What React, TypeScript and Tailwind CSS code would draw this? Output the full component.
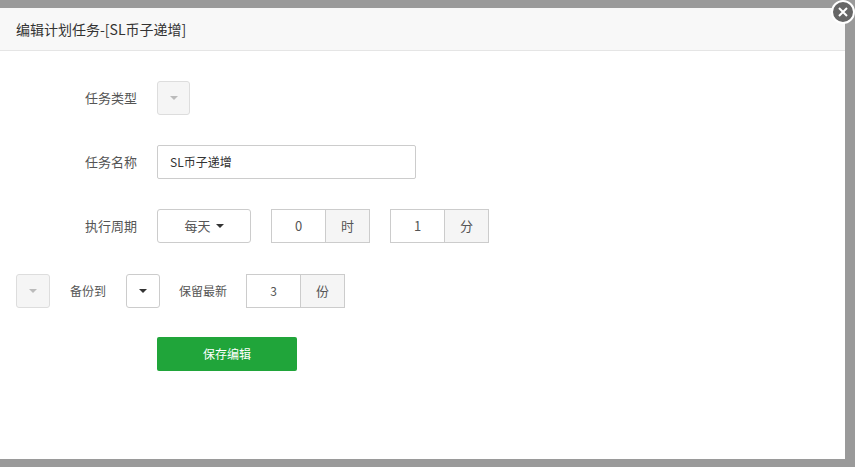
import React from 'react';

const font = { fontFamily: '"Microsoft YaHei", "Noto Sans CJK SC", sans-serif' };

const Caret = ({ light }: { light?: boolean }) => (
  <span className={`inline-block w-0 h-0 border-x-[4px] border-x-transparent border-t-[4px] ${light ? 'border-t-[#bbb]' : 'border-t-[#333]'}`} />
);

const App: React.FC = () => {
  return (
    <div className="w-[855px] h-[467px] bg-[#9a9a9a] relative overflow-hidden text-[13px] text-[#555]" style={font}>
      <div className="absolute left-0 top-[8px] w-[845px] h-[451px] bg-white flex flex-col">
        <div className="h-[43px] bg-[#f8f8f8] border-b border-[#e5e5e5] flex items-center pl-[16px] text-[14px] text-[#333]">
          编辑计划任务-[SL币子递增]
        </div>
        <div className="flex flex-col pt-[30px]">
          <div className="flex items-center h-[34px]">
            <span className="w-[157px] text-right pr-[20px]">任务类型</span>
            <div className="w-[33px] h-[34px] border border-[#ddd] rounded-[3px] bg-[#f5f5f5] flex items-center justify-center"><Caret light /></div>
          </div>
          <div className="flex items-center h-[34px] mt-[30px]">
            <span className="w-[157px] text-right pr-[20px]">任务名称</span>
            <div className="w-[259px] h-[34px] border border-[#ccc] rounded-[2px] flex items-center px-[12px] text-[12px] text-[#333]">SL币子递增</div>
          </div>
          <div className="flex items-center h-[34px] mt-[30px]">
            <span className="w-[157px] text-right pr-[20px]">执行周期</span>
            <div className="w-[94px] h-[34px] border border-[#ccc] rounded-[3px] flex items-center justify-center gap-[5px]">每天 <Caret /></div>
            <div className="ml-[20px] flex h-[34px]">
              <div className="w-[55px] border border-[#ccc] flex items-center justify-center">0</div>
              <div className="w-[44px] border border-l-0 border-[#ccc] bg-[#f5f5f5] flex items-center justify-center">时</div>
            </div>
            <div className="ml-[20px] flex h-[34px]">
              <div className="w-[55px] border border-[#ccc] flex items-center justify-center">1</div>
              <div className="w-[44px] border border-l-0 border-[#ccc] bg-[#f5f5f5] flex items-center justify-center">分</div>
            </div>
          </div>
          <div className="flex items-center h-[34px] mt-[31px] pl-[16px]">
            <div className="w-[34px] h-[34px] border border-[#ddd] rounded-[3px] bg-[#f5f5f5] flex items-center justify-center"><Caret light /></div>
            <span className="ml-[20px] text-[12px]">备份到</span>
            <div className="ml-[20px] w-[34px] h-[34px] border border-[#ccc] rounded-[3px] flex items-center justify-center"><Caret /></div>
            <span className="ml-[19px] text-[12px]">保留最新</span>
            <div className="ml-[19px] flex h-[34px]">
              <div className="w-[55px] border border-[#ccc] flex items-center justify-center text-[12px]">3</div>
              <div className="w-[44px] border border-l-0 border-[#ccc] bg-[#f5f5f5] flex items-center justify-center">份</div>
            </div>
          </div>
          <div className="mt-[29px] ml-[157px]">
            <button className="w-[140px] h-[34px] bg-[#20a53a] rounded-[2px] text-white text-[12px]">保存编辑</button>
          </div>
        </div>
      </div>
      <div className="absolute left-[831px] top-0 w-[24px] h-[24px] rounded-full bg-[#666] border-2 border-white flex items-center justify-center">
        <svg width="10" height="10" viewBox="0 0 10 10"><path d="M1 1L9 9M9 1L1 9" stroke="white" strokeWidth="2" /></svg>
      </div>
    </div>
  );
};

export default App;
